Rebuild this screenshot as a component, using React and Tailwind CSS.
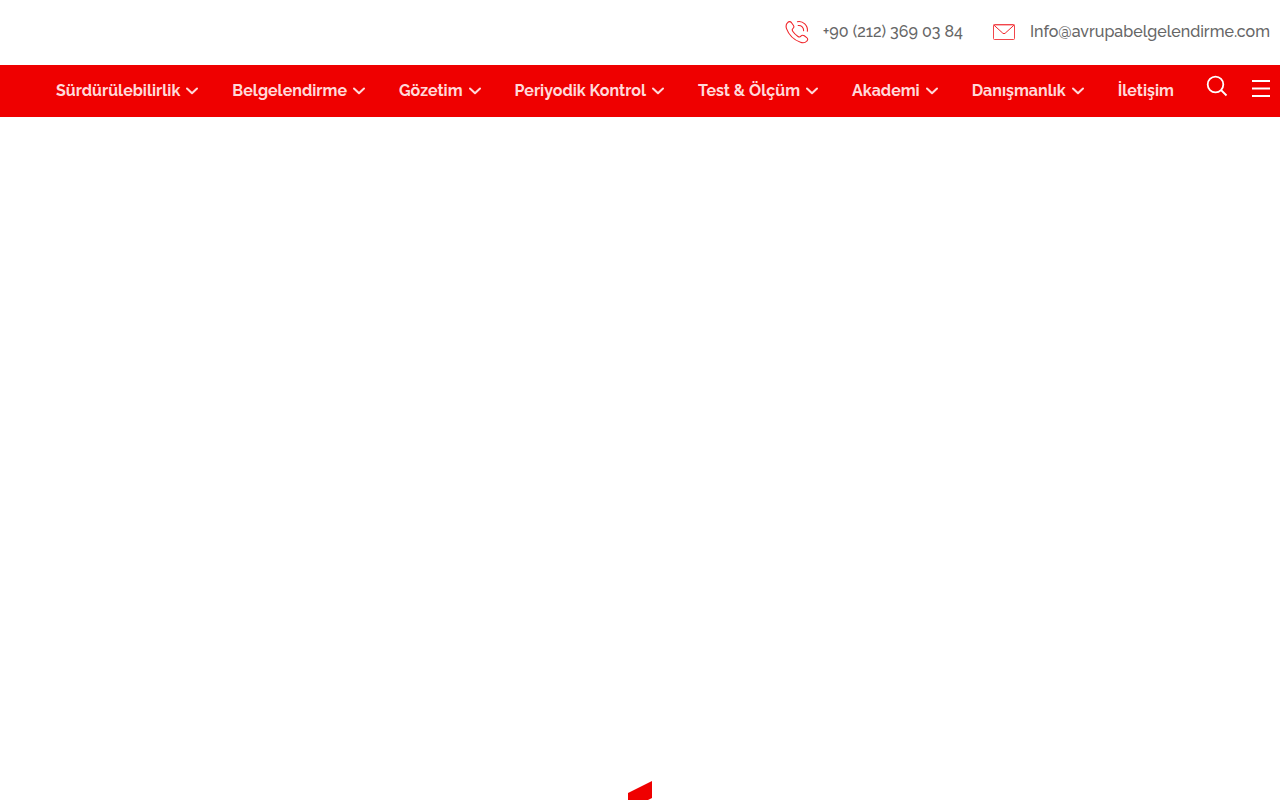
const menu = [
  { label: 'Sürdürülebilirlik', sub: true },
  { label: 'Belgelendirme', sub: true },
  { label: 'Gözetim', sub: true },
  { label: 'Periyodik Kontrol', sub: true },
  { label: 'Test & Ölçüm', sub: true },
  { label: 'Akademi', sub: true },
  { label: 'Danışmanlık', sub: true },
  { label: 'İletişim', sub: false },
];

function PhoneIcon() {
  return (
    <svg width="24" height="24" viewBox="0 0 24 24" fill="none" stroke="#f0262b" strokeWidth="1.1" strokeLinecap="round" strokeLinejoin="round">
      <path d="M2.6 2.6 C3.9 1.2 5.4 1.3 6.5 2.7 L8.3 5.2 C9.2 6.4 9 7.5 8 8.4 C6.8 9.4 6.9 10 7.7 11.2 C9.2 13.4 10.8 15 13 16.5 C14.2 17.3 15 17.2 15.9 16.1 C16.9 15 18.1 15 19.3 15.8 L21.7 17.6 C23 18.6 23 19.9 21.9 21 C20.3 22.8 18.1 23.2 15.5 22.3 C9 19.9 3.8 14.9 1.5 8.6 C0.7 6.2 1 4.2 2.6 2.6 Z" />
      <path d="M12.4 1.7 C18 0.6 23.1 5.4 22.4 11.3" />
      <path d="M13.2 5.5 C16.5 5.2 18.8 7.5 18.6 10.6" />
    </svg>
  );
}

function MailIcon() {
  return (
    <svg width="24" height="18" viewBox="0 0 24 18" fill="none" stroke="#f0262b" strokeLinejoin="round">
      <rect x="1.5" y="1.5" width="21" height="15" rx="1" strokeOpacity="0.85" />
      <path d="M2 2.5 H22" strokeOpacity="0.35" />
      <path d="M1.8 2 L10.8 10.2 Q12 11.2 13.2 10.2 L22.2 2" />
    </svg>
  );
}

function Chevron() {
  return (
    <svg width="12" height="8" viewBox="0 0 12 8" fill="none" stroke="currentColor" strokeWidth="2" strokeLinecap="round" strokeLinejoin="round">
      <path d="M1 1.5 L6 6.3 L11 1.5" />
    </svg>
  );
}

export default function App() {
  return (
    <div className="flex h-screen flex-col overflow-hidden bg-white font-['Raleway','Lato',sans-serif] text-base">
      <div className="flex h-[65px] shrink-0 items-center justify-end gap-[29px] pr-[10px] pb-[2px] font-medium text-[#666]">
        <a href="tel:+902123690384" className="flex items-center gap-[14px]">
          <PhoneIcon />
          <span>+90 (212) 369 03 84</span>
        </a>
        <a href="mailto:Info@avrupabelgelendirme.com" className="flex items-center gap-[14px]">
          <MailIcon />
          <span>Info@avrupabelgelendirme.com</span>
        </a>
      </div>

      <header className="flex h-[52px] shrink-0 items-center bg-[#ef0000] pr-[10px] pl-[56px] text-white">
        <nav className="flex flex-1 items-center">
          <ul className="flex items-center gap-[34px] font-bold text-[#ffd9d9]">
            {menu.map((item) => (
              <li key={item.label}>
                <a href="#" className="flex items-center gap-[6px] whitespace-nowrap">
                  {item.label}
                  {item.sub && <Chevron />}
                </a>
              </li>
            ))}
          </ul>
        </nav>
        <button type="button" aria-label="Ara" className="mb-[10px]">
          <svg width="22" height="22" viewBox="0 0 22 22" fill="none" stroke="currentColor" strokeWidth="1.8">
            <circle cx="9.5" cy="9.5" r="7.8" />
            <path d="M15 15 L20.5 20.5" />
          </svg>
        </button>
        <button type="button" aria-label="Menü" className="mb-[6px] ml-[24px]">
          <svg width="18" height="18" viewBox="0 0 18 18" fill="none" stroke="currentColor" strokeWidth="2">
            <path d="M0 2 H18 M0 9.5 H18 M0 17 H18" />
          </svg>
        </button>
      </header>

      <main className="flex flex-1 items-end justify-center">
        <svg width="24" height="19" viewBox="0 0 24 19">
          <path d="M0 12 L24 0 V17 L20 19 H0 Z" fill="#ef0000" />
        </svg>
      </main>
    </div>
  );
}
